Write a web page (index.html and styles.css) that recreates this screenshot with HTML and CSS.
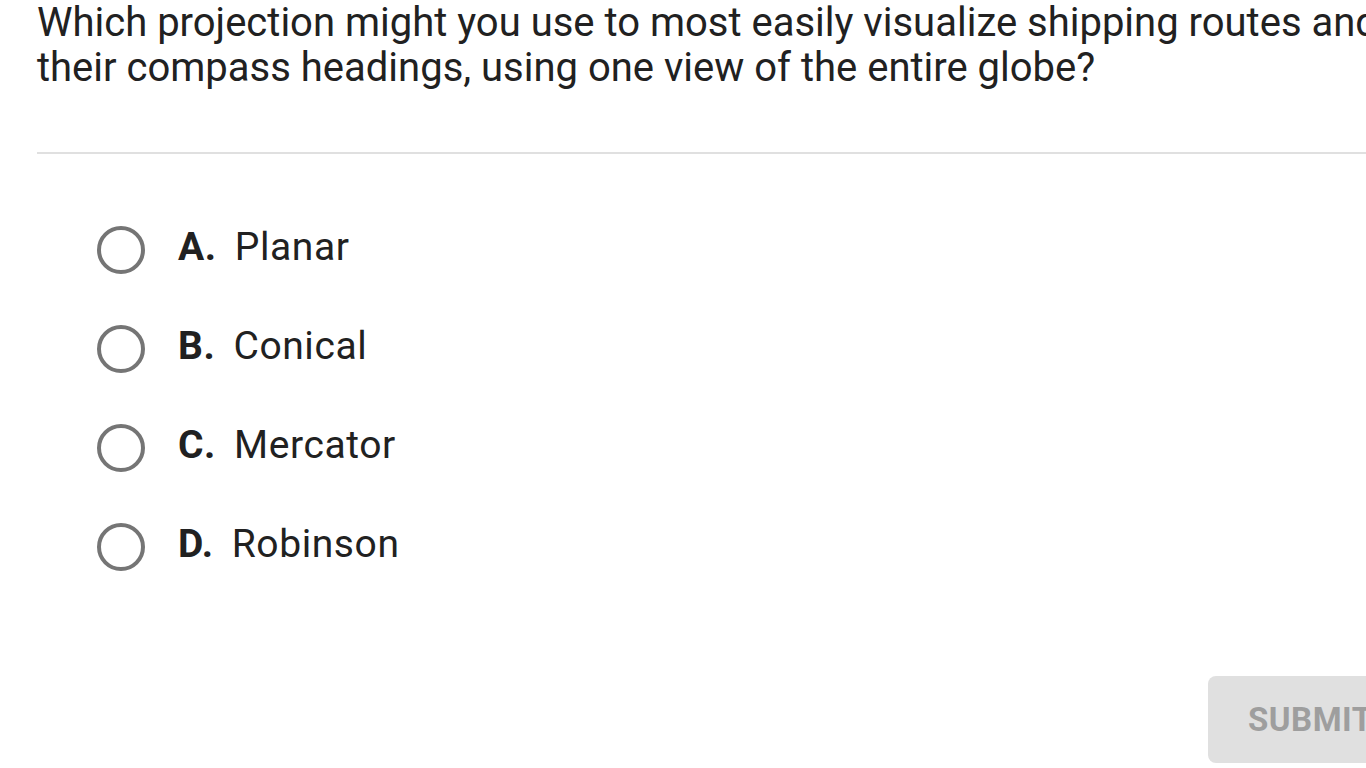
FILE: index.html
```html
<!DOCTYPE html>
<html lang="en">
<head>
<meta charset="utf-8">
<title>Question</title>
<link rel="stylesheet" href="styles.css">
</head>
<body>
<div class="page">
  <div class="question">Which projection might you use to most easily visualize shipping routes and their compass headings, using one view of the entire globe?</div>
  <hr class="divider">
  <ul class="options">
    <li class="option"><span class="radio"></span><span class="letter">A.</span><span class="text">Planar</span></li>
    <li class="option"><span class="radio"></span><span class="letter">B.</span><span class="text">Conical</span></li>
    <li class="option"><span class="radio"></span><span class="letter">C.</span><span class="text">Mercator</span></li>
    <li class="option"><span class="radio"></span><span class="letter">D.</span><span class="text">Robinson</span></li>
  </ul>
  <div class="actions">
    <button class="submit">SUBMIT</button>
  </div>
</div>
</body>
</html>
```
FILE: styles.css
```css
html, body {
  margin: 0;
  padding: 0;
  background: #ffffff;
  overflow: hidden;
  width: 1366px;
  height: 768px;
}
.page {
  width: 1400px;
  padding-left: 37px;
  font-family: Roboto, "Noto Sans", sans-serif;
  color: #212121;
}
.question {
  font-size: 40px;
  line-height: 45px;
  letter-spacing: 0;
  width: 1390px;
}
.divider {
  border: 0;
  height: 2px;
  background: #e0e0e0;
  margin: 62px 0 0 0;
}
.options {
  list-style: none;
  margin: 0;
  padding: 0 0 0 60px;
  display: flex;
  flex-direction: column;
  gap: 51px;
  margin-top: 72px;
}
.option {
  display: flex;
  align-items: center;
  height: 48px;
  font-size: 39px;
  letter-spacing: 0.6px;
}
.option .letter,
.option .text {
  position: relative;
  top: -3px;
}
.radio {
  width: 40px;
  height: 40px;
  border: 4px solid #757575;
  border-radius: 50%;
  margin-right: 33px;
  flex: none;
}
.letter {
  font-weight: 700;
  margin-right: 18px;
}
.actions {
  display: flex;
  margin-top: 105px;
  padding-left: 1171px;
}
.submit {
  border: 0;
  background: #e0e0e0;
  color: #9e9e9e;
  font-family: Roboto, "Noto Sans", sans-serif;
  font-weight: 700;
  font-size: 33px;
  height: 87px;
  padding: 0 40px;
  border-radius: 8px;
  letter-spacing: 0.5px;
}
```
